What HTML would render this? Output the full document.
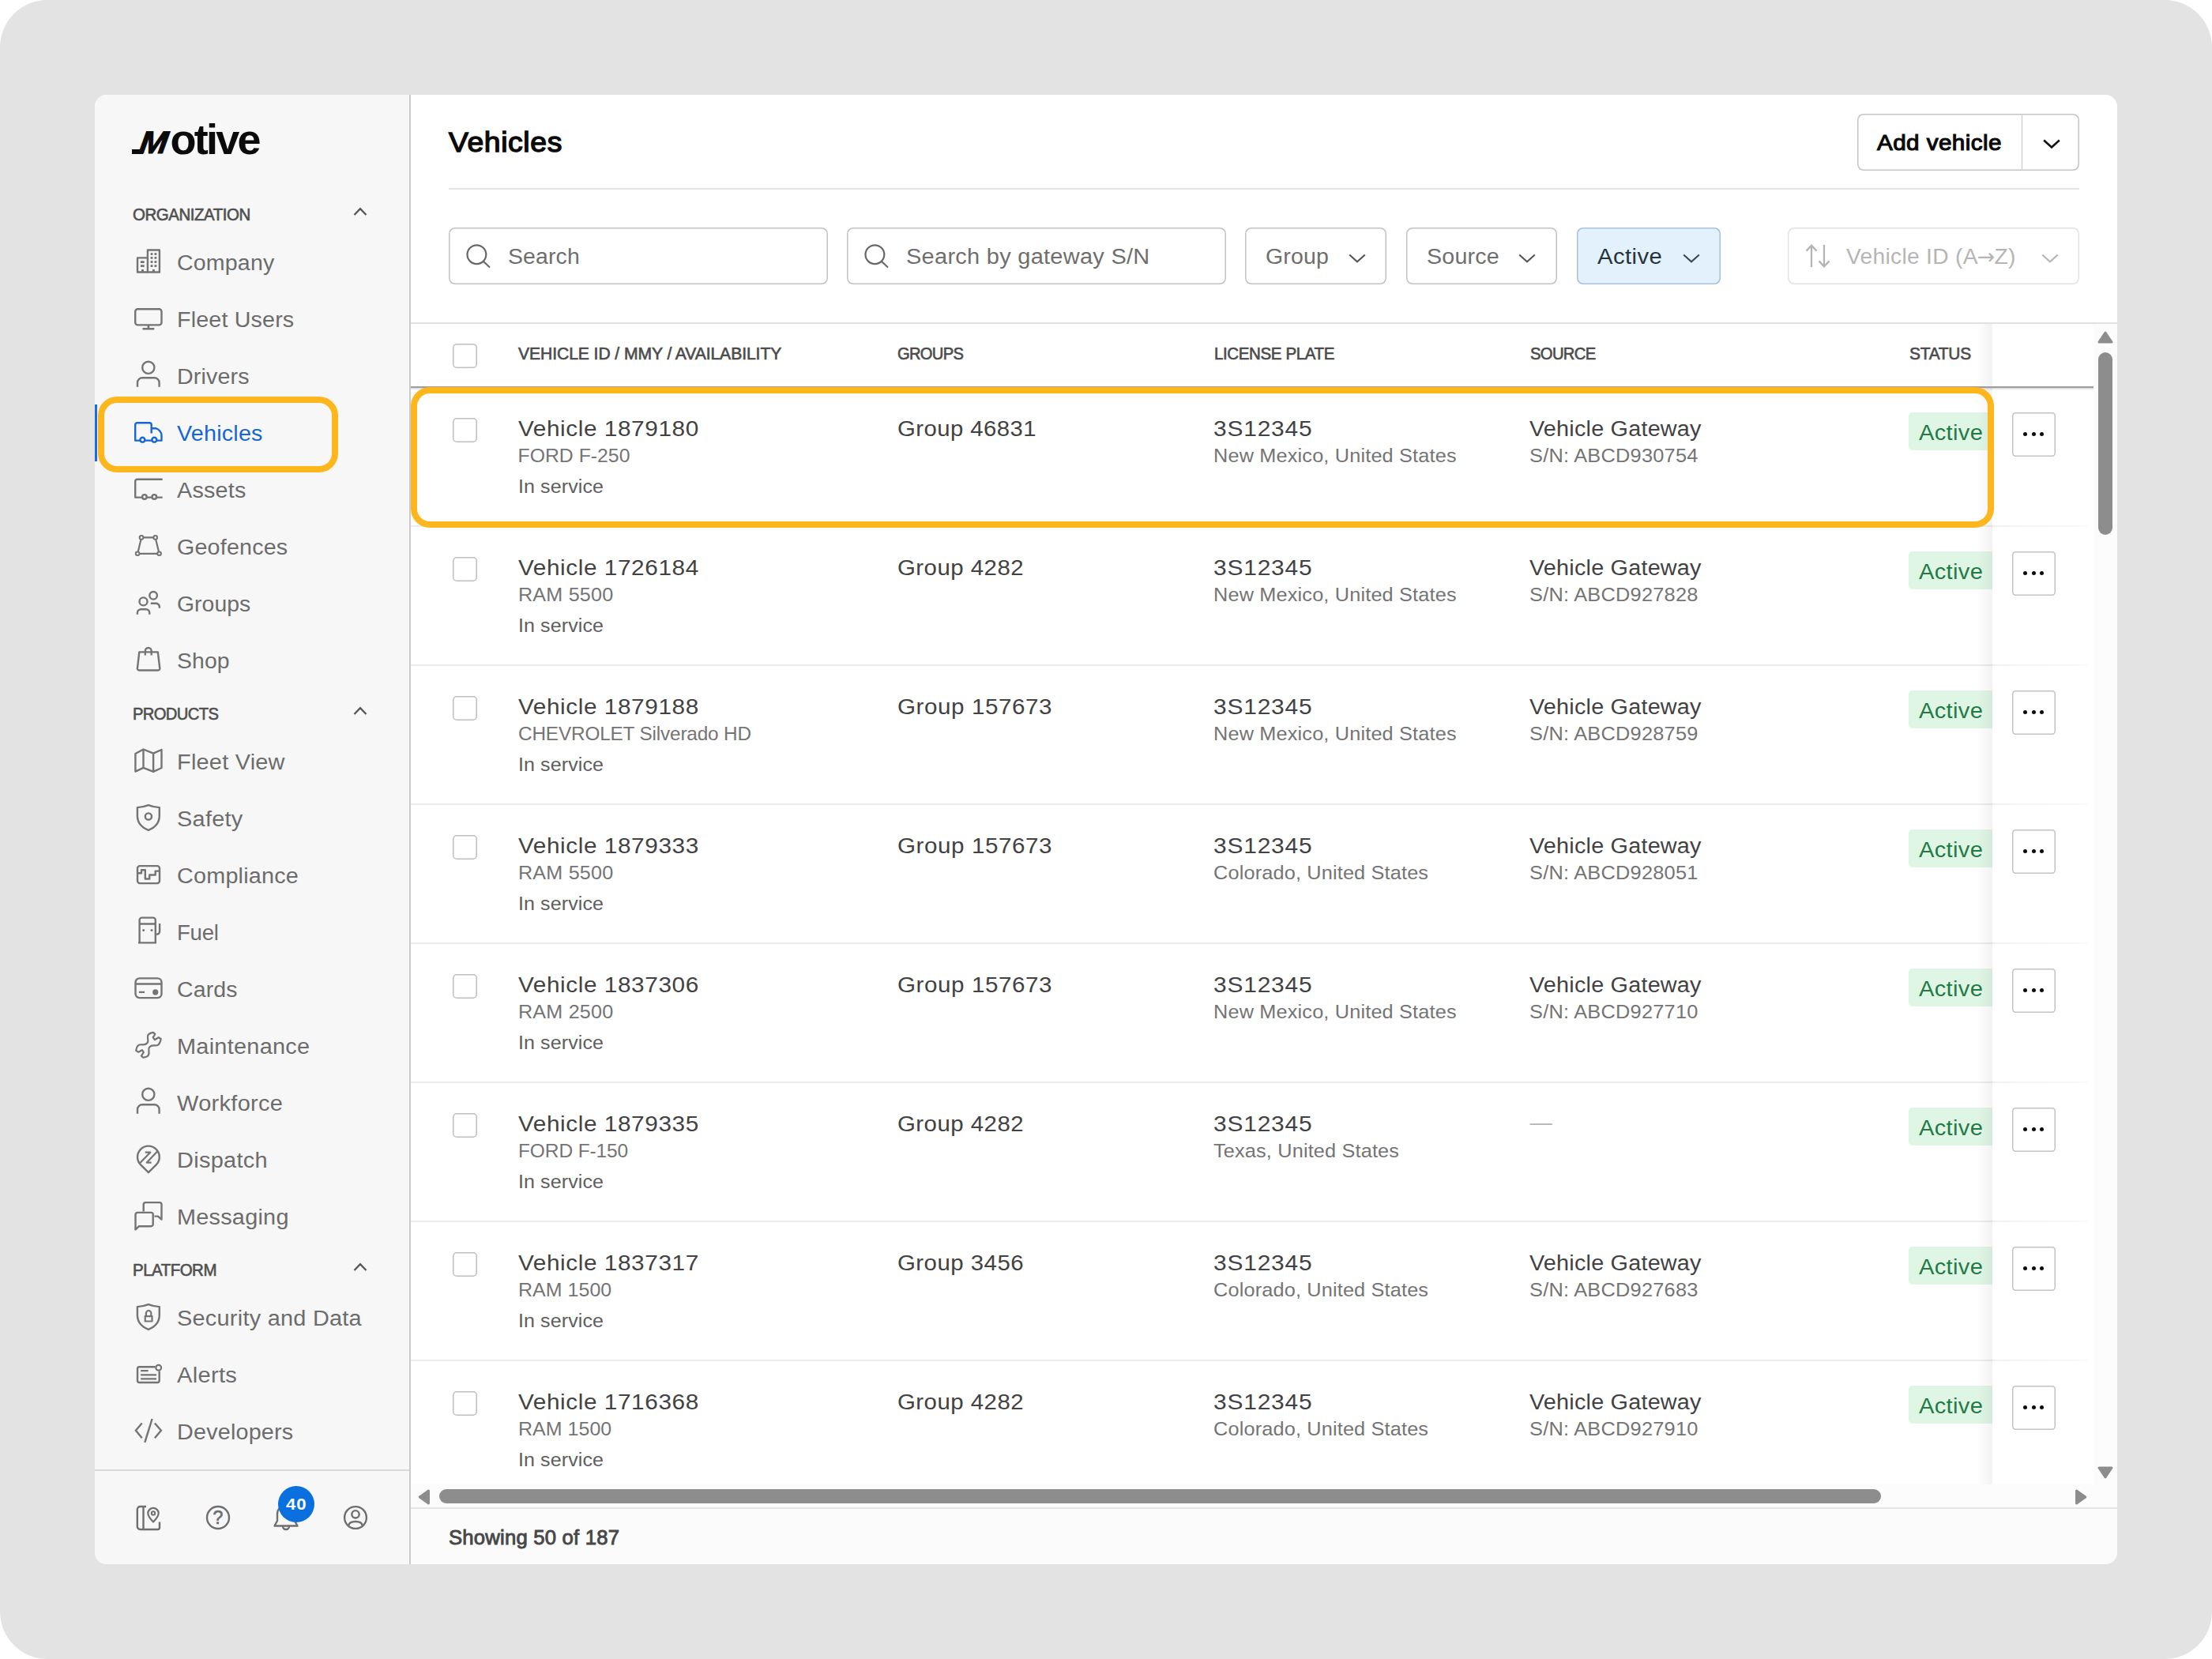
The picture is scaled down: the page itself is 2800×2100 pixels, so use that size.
<!DOCTYPE html><html lang="en"><head><meta charset="utf-8"><title>Vehicles</title><style>
html,body{margin:0;padding:0;background:#fff;}
body{width:2800px;height:2100px;overflow:hidden;position:relative;font-family:"Liberation Sans",sans-serif;}
.b{position:absolute;box-sizing:border-box;display:block;}
.t{position:absolute;white-space:nowrap;line-height:1;display:block;}
.cb{position:absolute;box-sizing:border-box;width:31px;height:31px;box-shadow:inset 0 0 0 1.5px #bfbfbf;border-radius:5px;background:#fff;}
.tag{position:absolute;box-sizing:border-box;background:#e0f6e5;border-radius:5px;height:47.5px;width:130px;}
.more{position:absolute;box-sizing:border-box;width:55.5px;height:55.5px;box-shadow:inset 0 0 0 1.5px #c2c2c2;border-radius:4.5px;background:#fff;}
.more i{position:absolute;width:5px;height:5px;border-radius:50%;background:#0d0d0d;top:25.2px;}
.fbox{position:absolute;box-sizing:border-box;box-shadow:inset 0 0 0 1.5px #c2c2c2;border-radius:8px;background:#fff;}
.hl{position:absolute;box-sizing:border-box;border:8px solid #fdb71c;}
</style></head><body>
<div class="b" style="left:0px;top:0px;width:2800px;height:2100px;background:#e3e3e3;border-radius:60px;"></div>
<div class="b" style="left:120px;top:120px;width:2560px;height:1860px;background:#fff;border-radius:15px;"></div>
<div class="b" style="left:120px;top:120px;width:400px;height:1860px;background:#f7f7f7;border-radius:15px 0 0 15px;border-right:2px solid #cbcbcb;"></div>
<nav class="b" style="left:0;top:0;width:0;height:0">
<div class="b" style="left:167.2px;top:188.8px;width:14px;height:6px;background:#0b0b0b;"></div>
<span class="t" style="left:174px;top:149.19px;font-size:54px;font-weight:700;color:#0b0b0b;letter-spacing:-2.75px;"><span style="display:inline-block;position:relative;top:-1.6px;font-size:40px;font-style:italic;letter-spacing:0;width:33.3px;margin-right:8.2px;-webkit-text-stroke:1.2px #0b0b0b;transform:scaleX(1.06) skewX(-8deg);transform-origin:0 100%;">M</span>otive</span>
<span class="t" style="left:167.50px;top:261.88px;font-size:21.4px;color:#505050;letter-spacing:-0.459px;transform:scaleX(0.9553);transform-origin:0 0;-webkit-text-stroke:0.64px #505050;">ORGANIZATION</span>
<svg class="b" style="left:447px;top:262px;overflow:visible" width="18" height="12" viewBox="0 0 18 12" fill="none" stroke="#555" stroke-width="2.3" stroke-linejoin="round" ><path d="M1.5 10 9 2.2 16.5 10" stroke-linejoin="miter"/></svg>
<span class="t" style="left:167.50px;top:893.88px;font-size:21.4px;color:#505050;letter-spacing:-0.676px;transform:scaleX(0.9445);transform-origin:0 0;-webkit-text-stroke:0.64px #505050;">PRODUCTS</span>
<svg class="b" style="left:447px;top:894px;overflow:visible" width="18" height="12" viewBox="0 0 18 12" fill="none" stroke="#555" stroke-width="2.3" stroke-linejoin="round" ><path d="M1.5 10 9 2.2 16.5 10" stroke-linejoin="miter"/></svg>
<span class="t" style="left:167.50px;top:1597.88px;font-size:21.4px;color:#505050;letter-spacing:-0.507px;transform:scaleX(0.9559);transform-origin:0 0;-webkit-text-stroke:0.64px #505050;">PLATFORM</span>
<svg class="b" style="left:447px;top:1598px;overflow:visible" width="18" height="12" viewBox="0 0 18 12" fill="none" stroke="#555" stroke-width="2.3" stroke-linejoin="round" ><path d="M1.5 10 9 2.2 16.5 10" stroke-linejoin="miter"/></svg>
<svg class="b" style="left:169.5px;top:314px;overflow:visible" width="36" height="36" viewBox="0 0 36 36" fill="none" stroke="#747474" stroke-width="2.4" stroke-linejoin="round" ><g color="#737373"><rect x="16.9" y="2.5" width="15" height="28"/><path d="M16.9 12.4H4V30.5H16.9"/><rect x="20.60" y="6.10" width="2.8" height="2.8" fill="currentColor" stroke="none"/><rect x="20.60" y="11.00" width="2.8" height="2.8" fill="currentColor" stroke="none"/><rect x="20.60" y="16.10" width="2.8" height="2.8" fill="currentColor" stroke="none"/><rect x="20.60" y="21.20" width="2.8" height="2.8" fill="currentColor" stroke="none"/><rect x="25.50" y="6.10" width="2.8" height="2.8" fill="currentColor" stroke="none"/><rect x="25.50" y="11.00" width="2.8" height="2.8" fill="currentColor" stroke="none"/><rect x="25.50" y="16.10" width="2.8" height="2.8" fill="currentColor" stroke="none"/><rect x="25.50" y="21.20" width="2.8" height="2.8" fill="currentColor" stroke="none"/><path d="M7.9 17.6H12.7M7.9 22.6H12.7" stroke-width="2.6"/><path d="M10.5 30.5V27M24.4 30.5V27" stroke-width="2.8"/></g></svg>
<span class="t" style="left:223.50px;top:318.33px;font-size:28.2px;color:#6c6c6c;letter-spacing:0.169px;transform:scaleX(1.0127);transform-origin:0 0;">Company</span>
<svg class="b" style="left:169.5px;top:386px;overflow:visible" width="36" height="36" viewBox="0 0 36 36" fill="none" stroke="#747474" stroke-width="2.4" stroke-linejoin="round" ><rect x="1.2" y="5.2" width="33.3" height="20.2" rx="3.2"/><path d="M17.9 25.4V30.3M10.5 30.3H25.3" stroke-width="2.6"/></svg>
<span class="t" style="left:223.50px;top:390.33px;font-size:28.2px;color:#6c6c6c;letter-spacing:0.160px;transform:scaleX(1.0169);transform-origin:0 0;">Fleet Users</span>
<svg class="b" style="left:169.5px;top:458px;overflow:visible" width="36" height="36" viewBox="0 0 36 36" fill="none" stroke="#747474" stroke-width="2.4" stroke-linejoin="round" ><circle cx="17.8" cy="7.3" r="7.6"/><path d="M4 31.8V26.3a6 6 0 0 1 6-6H25.6a6 6 0 0 1 6 6V31.8"/></svg>
<span class="t" style="left:223.50px;top:462.33px;font-size:28.2px;color:#6c6c6c;letter-spacing:0.150px;transform:scaleX(1.0153);transform-origin:0 0;">Drivers</span>
<svg class="b" style="left:169.5px;top:530px;overflow:visible" width="36" height="36" viewBox="0 0 36 36" fill="none" stroke="#1766d6" stroke-width="2.4" stroke-linejoin="round" ><path d="M7.4 27.6H1.2V7.7a2.5 2.5 0 0 1 2.5-2.5H19.2a2.5 2.5 0 0 1 2.5 2.5V18.5"/><path d="M21.7 12.2H27.2C31 13.3 34.5 17.2 34.5 21V27.6H28.3M22.3 27.6H13.4"/><circle cx="10.4" cy="26.7" r="2.95"/><circle cx="25.3" cy="26.7" r="2.95"/></svg>
<span class="t" style="left:223.50px;top:534.33px;font-size:28.2px;color:#1766d6;letter-spacing:0.196px;transform:scaleX(1.0200);transform-origin:0 0;">Vehicles</span>
<svg class="b" style="left:169.5px;top:602px;overflow:visible" width="36" height="36" viewBox="0 0 36 36" fill="none" stroke="#747474" stroke-width="2.4" stroke-linejoin="round" ><path d="M35.7 4.7H3.7a2.5 2.5 0 0 0-2.5 2.5V27.6H9.8M16 27.6H22.2M28.4 27.6H35.7"/><circle cx="12.9" cy="26.9" r="2.8"/><circle cx="25.3" cy="26.9" r="2.8"/></svg>
<span class="t" style="left:223.50px;top:606.33px;font-size:28.2px;color:#6c6c6c;letter-spacing:0.213px;transform:scaleX(1.0192);transform-origin:0 0;">Assets</span>
<svg class="b" style="left:169.5px;top:674px;overflow:visible" width="36" height="36" viewBox="0 0 36 36" fill="none" stroke="#747474" stroke-width="2.4" stroke-linejoin="round" ><path d="M11.4 6.4H24.3M6.5 26.8H29.2M8.5 8.7 4.7 24.4M27.2 8.7 31 24.4" stroke-width="2.2"/><circle cx="9" cy="6.4" r="2.3" stroke-width="2"/><circle cx="26.7" cy="6.4" r="2.3" stroke-width="2"/><circle cx="4.1" cy="26.8" r="2.3" stroke-width="2"/><circle cx="31.6" cy="26.8" r="2.3" stroke-width="2"/></svg>
<span class="t" style="left:223.50px;top:678.33px;font-size:28.2px;color:#6c6c6c;letter-spacing:0.189px;transform:scaleX(1.0169);transform-origin:0 0;">Geofences</span>
<svg class="b" style="left:169.5px;top:746px;overflow:visible" width="36" height="36" viewBox="0 0 36 36" fill="none" stroke="#747474" stroke-width="2.4" stroke-linejoin="round" ><circle cx="24.1" cy="7.8" r="4.8"/><circle cx="11.5" cy="15.4" r="5"/><path d="M20.8 17.75H27.5a4.4 4.4 0 0 1 4.4 4.4V23.8"/><path d="M3.9 31.7V29.6a4.4 4.4 0 0 1 4.4-4.4H14.85a4.4 4.4 0 0 1 4.4 4.4V31.7"/></svg>
<span class="t" style="left:223.50px;top:750.33px;font-size:28.2px;color:#6c6c6c;letter-spacing:0.067px;transform:scaleX(1.0055);transform-origin:0 0;">Groups</span>
<svg class="b" style="left:169.5px;top:818px;overflow:visible" width="36" height="36" viewBox="0 0 36 36" fill="none" stroke="#747474" stroke-width="2.4" stroke-linejoin="round" ><path d="M6.3 7.4H29.8L32.3 28a2.2 2.2 0 0 1-2.2 2.5H6.1a2.2 2.2 0 0 1-2.2-2.5Z"/><path d="M13.8 11.5V6a3.95 3.95 0 0 1 7.9 0V11.5"/></svg>
<span class="t" style="left:223.50px;top:822.33px;font-size:28.2px;color:#6c6c6c;letter-spacing:0.099px;transform:scaleX(1.0068);transform-origin:0 0;">Shop</span>
<svg class="b" style="left:169.5px;top:946px;overflow:visible" width="36" height="36" viewBox="0 0 36 36" fill="none" stroke="#747474" stroke-width="2.4" stroke-linejoin="round" ><path d="M1.4 8 11.5 2.5 24.1 7.7 34.5 3V26L24.1 30.8 11.5 25.8 1.4 30.6ZM11.5 2.5V25.8M24.1 7.7V30.8"/></svg>
<span class="t" style="left:223.50px;top:950.33px;font-size:28.2px;color:#6c6c6c;letter-spacing:0.233px;transform:scaleX(1.0245);transform-origin:0 0;">Fleet View</span>
<svg class="b" style="left:169.5px;top:1018px;overflow:visible" width="36" height="36" viewBox="0 0 36 36" fill="none" stroke="#747474" stroke-width="2.4" stroke-linejoin="round" ><path d="M17.85 1.2C13.5 3 8.5 3.9 3.9 4.1V14.5C3.9 23 9.5 29.5 17.85 32.8C26.2 29.5 31.8 23 31.8 14.5V4.1C27.2 3.9 22.2 3 17.85 1.2Z"/><circle cx="17.9" cy="15.5" r="4.1"/></svg>
<span class="t" style="left:223.50px;top:1022.33px;font-size:28.2px;color:#6c6c6c;letter-spacing:0.266px;transform:scaleX(1.0255);transform-origin:0 0;">Safety</span>
<svg class="b" style="left:169.5px;top:1090px;overflow:visible" width="36" height="36" viewBox="0 0 36 36" fill="none" stroke="#747474" stroke-width="2.4" stroke-linejoin="round" ><rect x="4" y="6.1" width="28" height="22" rx="3"/><path d="M4 15.3H9V11.2H13.8V22.5H19.25V17.5H26.7V12.6H32"/></svg>
<span class="t" style="left:223.50px;top:1094.33px;font-size:28.2px;color:#6c6c6c;letter-spacing:0.219px;transform:scaleX(1.0202);transform-origin:0 0;">Compliance</span>
<svg class="b" style="left:169.5px;top:1162px;overflow:visible" width="36" height="36" viewBox="0 0 36 36" fill="none" stroke="#747474" stroke-width="2.4" stroke-linejoin="round" ><path d="M6.6 31.4V2.6a3 3 0 0 1 3-3H23.8a3 3 0 0 1 3 3V31.4M5 31.4H28M6.6 7.5H26.8"/><path d="M26.8 20.6H28.6a3.5 3.5 0 0 0 3.5-3.5V7"/><circle cx="11.7" cy="15.6" r="1.5" fill="currentColor" stroke="none" color="#737373"/><circle cx="22" cy="15.6" r="1.5" fill="currentColor" stroke="none" color="#737373"/></svg>
<span class="t" style="left:223.50px;top:1166.33px;font-size:28.2px;color:#6c6c6c;letter-spacing:-0.268px;transform:scaleX(0.9785);transform-origin:0 0;">Fuel</span>
<svg class="b" style="left:169.5px;top:1234px;overflow:visible" width="36" height="36" viewBox="0 0 36 36" fill="none" stroke="#747474" stroke-width="2.4" stroke-linejoin="round" ><rect x="1.5" y="4.4" width="33" height="24.7" rx="5"/><path d="M1.5 11.5H34.5M5.9 21.9H13.1"/><circle cx="26.7" cy="21.9" r="3.6" fill="currentColor" stroke="none" color="#737373"/></svg>
<span class="t" style="left:223.50px;top:1238.33px;font-size:28.2px;color:#6c6c6c;letter-spacing:0.136px;transform:scaleX(1.0109);transform-origin:0 0;">Cards</span>
<svg class="b" style="left:169.5px;top:1306px;overflow:visible" width="36" height="36" viewBox="0 0 36 36" fill="none" stroke="#747474" stroke-width="2.4" stroke-linejoin="round" ><path d="M24 0.9 C21 1.3 18.6 2.4 17.6 3.9 C16.6 5.5 16.9 8 17.2 9.6 C17.5 11.2 17.6 12.8 16.4 14.2 C15.1 15.7 13.2 16.4 11.2 16.4 C9.2 16.4 7.2 15.8 5.6 16.9 C4 18 2.6 21 2.2 23.9 L5.2 25.7 L9.9 23.2 L11.8 26.2 L8.8 30.7 L11.3 32.7 C14 32.3 16.6 31.4 17.7 29.8 C18.8 28.2 18.7 26.2 18.4 24.4 C18.1 22.6 18 20.8 19.2 19.4 C20.5 17.9 22.4 17.3 24.4 17.3 C26.4 17.3 28.6 17.8 30.2 16.6 C31.8 15.4 33.2 12 33.7 9 L30.7 7.2 L25.8 10.2 L23.7 7.1 L26.4 3Z" stroke-width="2.2"/></svg>
<span class="t" style="left:223.50px;top:1310.33px;font-size:28.2px;color:#6c6c6c;letter-spacing:0.261px;transform:scaleX(1.0248);transform-origin:0 0;">Maintenance</span>
<svg class="b" style="left:169.5px;top:1378px;overflow:visible" width="36" height="36" viewBox="0 0 36 36" fill="none" stroke="#747474" stroke-width="2.4" stroke-linejoin="round" ><circle cx="17.8" cy="7.3" r="7.6"/><path d="M4 31.8V26.3a6 6 0 0 1 6-6H25.6a6 6 0 0 1 6 6V31.8"/></svg>
<span class="t" style="left:223.50px;top:1382.33px;font-size:28.2px;color:#6c6c6c;letter-spacing:0.294px;transform:scaleX(1.0283);transform-origin:0 0;">Workforce</span>
<svg class="b" style="left:169.5px;top:1450px;overflow:visible" width="36" height="36" viewBox="0 0 36 36" fill="none" stroke="#747474" stroke-width="2.4" stroke-linejoin="round" ><path d="M17.9 34.2 8.3 24.6A13.9 13.9 0 1 1 27.5 24.6Z"/><path d="M6.8 22.5 20.3 8.7H13.8M29.4 7.2 15.8 21.6H21.7" stroke-width="2.2"/></svg>
<span class="t" style="left:223.50px;top:1454.33px;font-size:28.2px;color:#6c6c6c;letter-spacing:0.282px;transform:scaleX(1.0276);transform-origin:0 0;">Dispatch</span>
<svg class="b" style="left:169.5px;top:1522px;overflow:visible" width="36" height="36" viewBox="0 0 36 36" fill="none" stroke="#747474" stroke-width="2.4" stroke-linejoin="round" ><path d="M11.7 11.5V2.6a2.5 2.5 0 0 1 2.5-2.5H32a2.5 2.5 0 0 1 2.5 2.5V21.5L30 17.6H25.5"/><path d="M1.5 34.5V15.4a2.5 2.5 0 0 1 2.5-2.5H21.2a2.5 2.5 0 0 1 2.5 2.5V27.7a2.5 2.5 0 0 1-2.5 2.5H6Z"/></svg>
<span class="t" style="left:223.50px;top:1526.33px;font-size:28.2px;color:#6c6c6c;letter-spacing:0.249px;transform:scaleX(1.0224);transform-origin:0 0;">Messaging</span>
<svg class="b" style="left:169.5px;top:1650px;overflow:visible" width="36" height="36" viewBox="0 0 36 36" fill="none" stroke="#747474" stroke-width="2.4" stroke-linejoin="round" ><path d="M17.85 1.2C13.5 3 8.5 3.9 3.9 4.1V14.5C3.9 23 9.5 29.5 17.85 32.8C26.2 29.5 31.8 23 31.8 14.5V4.1C27.2 3.9 22.2 3 17.85 1.2Z"/><rect x="13.7" y="16.2" width="8.8" height="6.3" stroke-width="2.2"/><path d="M14.9 16.2V12.2a3.2 3.2 0 0 1 6.4 0V16.2" stroke-width="2.2"/></svg>
<span class="t" style="left:223.50px;top:1654.33px;font-size:28.2px;color:#6c6c6c;letter-spacing:0.235px;transform:scaleX(1.0258);transform-origin:0 0;">Security and Data</span>
<svg class="b" style="left:169.5px;top:1722px;overflow:visible" width="36" height="36" viewBox="0 0 36 36" fill="none" stroke="#747474" stroke-width="2.4" stroke-linejoin="round" ><path d="M26.5 8.3H6.5a2.5 2.5 0 0 0-2.5 2.5V25.5a2.5 2.5 0 0 0 2.5 2.5H29.2a2.5 2.5 0 0 0 2.5-2.5V13.6"/><circle cx="30.7" cy="9.3" r="3.4" stroke-width="2.2"/><path d="M8.1 13.2H17.6M8.1 18.3H28M8.1 23.3H28" stroke-width="2.2"/></svg>
<span class="t" style="left:223.50px;top:1726.33px;font-size:28.2px;color:#6c6c6c;letter-spacing:0.293px;transform:scaleX(1.0314);transform-origin:0 0;">Alerts</span>
<svg class="b" style="left:169.5px;top:1794px;overflow:visible" width="36" height="36" viewBox="0 0 36 36" fill="none" stroke="#747474" stroke-width="2.4" stroke-linejoin="round" ><path d="M9.7 7.5 1.9 16.7 9.7 26.3M25.9 7.5 33.9 16.7 25.9 26.3M22.6 2 13.3 31.8" stroke-linejoin="miter"/></svg>
<span class="t" style="left:223.50px;top:1798.33px;font-size:28.2px;color:#6c6c6c;letter-spacing:0.199px;transform:scaleX(1.0192);transform-origin:0 0;">Developers</span>
<div class="b" style="left:120px;top:512px;width:3px;height:72px;background:#1a6be0;"></div>
<div class="hl" style="left:124px;top:502px;width:304px;height:95.5px;border-radius:24px;"></div>
<div class="b" style="left:120px;top:1859.5px;width:398px;height:2px;background:#d9d9d9;"></div>
<svg class="b" style="left:169.5px;top:1903px;overflow:visible" width="36" height="36" viewBox="0 0 36 36" fill="none" stroke="#6f6f6f" stroke-width="2.4" stroke-linejoin="round" ><path d="M32 23.5V30.5a2.5 2.5 0 0 1-2.5 2.5H7.5a3.7 3.7 0 0 1-3.7-3.7V7.7A3.7 3.7 0 0 1 7.5 4H15M11.5 4V33"/><path d="M24 23.6C20.5 20 17.3 16.6 17.3 12.6a6.7 6.7 0 0 1 13.4 0C30.7 16.6 27.5 20 24 23.6Z" stroke-width="2.2"/><circle cx="24" cy="12.4" r="2.2" stroke-width="2"/></svg>
<svg class="b" style="left:257.5px;top:1903px;overflow:visible" width="36" height="36" viewBox="0 0 36 36" fill="none" stroke="#6f6f6f" stroke-width="2.4" stroke-linejoin="round" ><circle cx="18" cy="18" r="14"/><text x="18" y="26.2" text-anchor="middle" font-family="Liberation Sans, sans-serif" font-size="23" fill="#6f6f6f" stroke="#6f6f6f" stroke-width="0.7">?</text></svg>
<svg class="b" style="left:343.5px;top:1903px;overflow:visible" width="36" height="36" viewBox="0 0 36 36" fill="none" stroke="#6f6f6f" stroke-width="2.4" stroke-linejoin="round" ><path d="M3.5 28.5H32.5L29 22V13.5a11 11 0 0 0-22 0V22Z"/><path d="M14 29a4 4 0 0 0 8 0"/></svg>
<svg class="b" style="left:432px;top:1903px;overflow:visible" width="36" height="36" viewBox="0 0 36 36" fill="none" stroke="#6f6f6f" stroke-width="2.4" stroke-linejoin="round" ><circle cx="18" cy="18" r="13.9"/><circle cx="18" cy="13.8" r="4.7"/><path d="M9.3 28.2C9.8 24.5 13 23 18 23s8.2 1.5 8.7 5.2"/></svg>
<div class="b" style="left:351.8px;top:1880.7px;width:46.2px;height:46.2px;background:#0a6fdf;border-radius:50%;"></div>
<span class="t" style="left:362.20px;top:1893.42px;font-size:21px;color:#fff;letter-spacing:0.817px;transform:scaleX(1.0554);transform-origin:0 0;font-weight:700;">40</span>
</nav><main class="b" style="left:0;top:0;width:0;height:0"><header>
<span class="t" style="left:567.50px;top:162.86px;font-size:35.6px;color:#0a0a0a;letter-spacing:0.586px;transform:scaleX(1.0488);transform-origin:0 0;-webkit-text-stroke:1.42px #0a0a0a;">Vehicles</span>
<div class="fbox" style="left:2351px;top:144px;width:281px;height:72px;box-shadow:inset 0 0 0 1.5px #c4c4c4;"></div>
<div class="b" style="left:2558.6px;top:145.5px;width:1.75px;height:68.5px;background:#c4c4c4;"></div>
<span class="t" style="left:2376.00px;top:166.46px;font-size:28.4px;color:#0a0a0a;letter-spacing:0.410px;transform:scaleX(1.0435);transform-origin:0 0;-webkit-text-stroke:1.14px #0a0a0a;">Add vehicle</span>
<svg class="b" style="left:2585.5px;top:175.5px;overflow:visible" width="22" height="12" viewBox="0 0 22 12" fill="none" stroke="#111" stroke-width="2.6" stroke-linejoin="round" ><path d="M1.2 1.5 11.0 10.4 20.8 1.5" stroke-linejoin="miter"/></svg>
<div class="b" style="left:568px;top:238px;width:2064px;height:2px;background:#e3e3e3;"></div>
</header><section>
<div class="fbox" style="left:568px;top:288px;width:480px;height:72px;"></div>
<svg class="b" style="left:589.5px;top:308.5px;overflow:visible" width="31" height="31" viewBox="0 0 31 31" fill="none" stroke="#676767" stroke-width="2.2" stroke-linejoin="round" ><circle cx="13.4" cy="13.2" r="11.9"/><path d="M21.8 21.8 30 29.5"/></svg>
<span class="t" style="left:642.50px;top:310.13px;font-size:28.2px;color:#6e6e6e;letter-spacing:0.116px;transform:scaleX(1.0098);transform-origin:0 0;">Search</span>
<div class="fbox" style="left:1072px;top:288px;width:480px;height:72px;"></div>
<svg class="b" style="left:1093.8px;top:308.5px;overflow:visible" width="31" height="31" viewBox="0 0 31 31" fill="none" stroke="#676767" stroke-width="2.2" stroke-linejoin="round" ><circle cx="13.4" cy="13.2" r="11.9"/><path d="M21.8 21.8 30 29.5"/></svg>
<span class="t" style="left:1146.50px;top:310.13px;font-size:28.2px;color:#6e6e6e;letter-spacing:0.268px;transform:scaleX(1.0279);transform-origin:0 0;">Search by gateway S/N</span>
<div class="fbox" style="left:1576px;top:288px;width:179px;height:72px;"></div>
<span class="t" style="left:1601.70px;top:310.13px;font-size:28.2px;color:#6e6e6e;letter-spacing:0.145px;transform:scaleX(1.0112);transform-origin:0 0;">Group</span>
<svg class="b" style="left:1707px;top:321px;overflow:visible" width="22" height="12" viewBox="0 0 22 12" fill="none" stroke="#555" stroke-width="2.1" stroke-linejoin="round" ><path d="M1.2 1.5 11.0 10.4 20.8 1.5" stroke-linejoin="miter"/></svg>
<div class="fbox" style="left:1779.5px;top:288px;width:191.5px;height:72px;"></div>
<span class="t" style="left:1805.70px;top:310.13px;font-size:28.2px;color:#6e6e6e;letter-spacing:0.194px;transform:scaleX(1.0165);transform-origin:0 0;">Source</span>
<svg class="b" style="left:1922px;top:321px;overflow:visible" width="22" height="12" viewBox="0 0 22 12" fill="none" stroke="#555" stroke-width="2.1" stroke-linejoin="round" ><path d="M1.2 1.5 11.0 10.4 20.8 1.5" stroke-linejoin="miter"/></svg>
<div class="fbox" style="left:1996px;top:288px;width:181.5px;height:72px;background:#e2f1fc;box-shadow:inset 0 0 0 1.5px #a9c1da;"></div>
<span class="t" style="left:2022.00px;top:310.13px;font-size:28.2px;color:#26323f;letter-spacing:0.390px;transform:scaleX(1.0395);transform-origin:0 0;">Active</span>
<svg class="b" style="left:2130px;top:321px;overflow:visible" width="22" height="12" viewBox="0 0 22 12" fill="none" stroke="#3c4650" stroke-width="2.1" stroke-linejoin="round" ><path d="M1.2 1.5 11.0 10.4 20.8 1.5" stroke-linejoin="miter"/></svg>
<div class="fbox" style="left:2263px;top:288px;width:369px;height:72px;box-shadow:inset 0 0 0 1.5px #e2e2e2;"></div>
<svg class="b" style="left:2284.5px;top:308px;overflow:visible" width="32" height="32" viewBox="0 0 32 32" fill="none" stroke="#b4b4b4" stroke-width="2.3" stroke-linejoin="round" ><path d="M8 30V3M1.5 9.6 8 2.6 14.5 9.6M24 2V29M17.5 22.4 24 29.4 30.5 22.4" stroke-linejoin="miter"/></svg>
<span class="t" style="left:2337px;top:310.13px;font-size:28.2px;color:#b5b5b5;letter-spacing:0.3px">Vehicle ID (A<span style="font-family:'DejaVu Sans',sans-serif;font-size:27px;letter-spacing:0;margin:0 -1px 0 -1px">→</span>Z)</span>
<svg class="b" style="left:2584px;top:321px;overflow:visible" width="22" height="12" viewBox="0 0 22 12" fill="none" stroke="#b4b4b4" stroke-width="2.1" stroke-linejoin="round" ><path d="M1.2 1.5 11.0 10.4 20.8 1.5" stroke-linejoin="miter"/></svg>
</section><section>
<div class="b" style="left:520px;top:408px;width:2160px;height:2px;background:#e1e1e1;"></div>
<div class="cb" style="left:573px;top:434.5px;"></div>
<span class="t" style="left:656.00px;top:438.08px;font-size:21.4px;color:#4b4b4b;letter-spacing:-0.090px;transform:scaleX(0.9882);transform-origin:0 0;-webkit-text-stroke:0.64px #4b4b4b;">VEHICLE ID / MMY / AVAILABILITY</span>
<span class="t" style="left:1136.00px;top:438.08px;font-size:21.4px;color:#4b4b4b;letter-spacing:-0.754px;transform:scaleX(0.9428);transform-origin:0 0;-webkit-text-stroke:0.64px #4b4b4b;">GROUPS</span>
<span class="t" style="left:1536.50px;top:438.08px;font-size:21.4px;color:#4b4b4b;letter-spacing:-0.393px;transform:scaleX(0.9587);transform-origin:0 0;-webkit-text-stroke:0.64px #4b4b4b;">LICENSE PLATE</span>
<span class="t" style="left:1936.50px;top:438.08px;font-size:21.4px;color:#4b4b4b;letter-spacing:-0.702px;transform:scaleX(0.9459);transform-origin:0 0;-webkit-text-stroke:0.64px #4b4b4b;">SOURCE</span>
<span class="t" style="left:2416.50px;top:438.08px;font-size:21.4px;color:#4b4b4b;letter-spacing:-0.258px;transform:scaleX(0.9768);transform-origin:0 0;-webkit-text-stroke:0.64px #4b4b4b;">STATUS</span>
<div class="cb" style="left:573px;top:529px;"></div>
<span class="t" style="left:655.50px;top:527.83px;font-size:28.2px;color:#424242;letter-spacing:0.535px;transform:scaleX(1.0568);transform-origin:0 0;">Vehicle 1879180</span>
<span class="t" style="left:655.50px;top:565.21px;font-size:24.8px;color:#747474;">FORD F-250</span>
<span class="t" style="left:656.00px;top:603.81px;font-size:24.8px;color:#5e5e5e;letter-spacing:0.079px;transform:scaleX(1.0102);transform-origin:0 0;">In service</span>
<span class="t" style="left:1135.50px;top:527.83px;font-size:28.2px;color:#424242;letter-spacing:0.424px;transform:scaleX(1.0401);transform-origin:0 0;">Group 46831</span>
<span class="t" style="left:1536.00px;top:527.83px;font-size:28.2px;color:#424242;letter-spacing:0.743px;transform:scaleX(1.0628);transform-origin:0 0;">3S12345</span>
<span class="t" style="left:1536.00px;top:565.21px;font-size:24.8px;color:#747474;letter-spacing:0.161px;transform:scaleX(1.0199);transform-origin:0 0;">New Mexico, United States</span>
<span class="t" style="left:1936.00px;top:527.83px;font-size:28.2px;color:#424242;letter-spacing:0.211px;transform:scaleX(1.0215);transform-origin:0 0;">Vehicle Gateway</span>
<span class="t" style="left:1936.00px;top:565.21px;font-size:24.8px;color:#747474;letter-spacing:0.222px;transform:scaleX(1.0233);transform-origin:0 0;">S/N: ABCD930754</span>
<div class="tag" style="left:2416px;top:522px;"></div>
<span class="t" style="left:2429.30px;top:533.13px;font-size:28.2px;color:#237a45;letter-spacing:0.315px;transform:scaleX(1.0317);transform-origin:0 0;">Active</span>
<div class="b" style="left:520px;top:665px;width:2130px;height:2px;background:#ececec;"></div>
<div class="cb" style="left:573px;top:705px;"></div>
<span class="t" style="left:655.50px;top:703.83px;font-size:28.2px;color:#424242;letter-spacing:0.535px;transform:scaleX(1.0568);transform-origin:0 0;">Vehicle 1726184</span>
<span class="t" style="left:655.50px;top:741.21px;font-size:24.8px;color:#747474;letter-spacing:0.172px;transform:scaleX(1.0157);transform-origin:0 0;">RAM 5500</span>
<span class="t" style="left:656.00px;top:779.81px;font-size:24.8px;color:#5e5e5e;letter-spacing:0.079px;transform:scaleX(1.0102);transform-origin:0 0;">In service</span>
<span class="t" style="left:1135.50px;top:703.83px;font-size:28.2px;color:#424242;letter-spacing:0.458px;transform:scaleX(1.0432);transform-origin:0 0;">Group 4282</span>
<span class="t" style="left:1536.00px;top:703.83px;font-size:28.2px;color:#424242;letter-spacing:0.743px;transform:scaleX(1.0628);transform-origin:0 0;">3S12345</span>
<span class="t" style="left:1536.00px;top:741.21px;font-size:24.8px;color:#747474;letter-spacing:0.161px;transform:scaleX(1.0199);transform-origin:0 0;">New Mexico, United States</span>
<span class="t" style="left:1936.00px;top:703.83px;font-size:28.2px;color:#424242;letter-spacing:0.211px;transform:scaleX(1.0215);transform-origin:0 0;">Vehicle Gateway</span>
<span class="t" style="left:1936.00px;top:741.21px;font-size:24.8px;color:#747474;letter-spacing:0.222px;transform:scaleX(1.0233);transform-origin:0 0;">S/N: ABCD927828</span>
<div class="tag" style="left:2416px;top:698px;"></div>
<span class="t" style="left:2429.30px;top:709.13px;font-size:28.2px;color:#237a45;letter-spacing:0.315px;transform:scaleX(1.0317);transform-origin:0 0;">Active</span>
<div class="b" style="left:520px;top:841px;width:2130px;height:2px;background:#ececec;"></div>
<div class="cb" style="left:573px;top:881px;"></div>
<span class="t" style="left:655.50px;top:879.83px;font-size:28.2px;color:#424242;letter-spacing:0.535px;transform:scaleX(1.0568);transform-origin:0 0;">Vehicle 1879188</span>
<span class="t" style="left:655.50px;top:917.21px;font-size:24.8px;color:#747474;letter-spacing:-0.175px;transform:scaleX(0.9821);transform-origin:0 0;">CHEVROLET Silverado HD</span>
<span class="t" style="left:656.00px;top:955.81px;font-size:24.8px;color:#5e5e5e;letter-spacing:0.079px;transform:scaleX(1.0102);transform-origin:0 0;">In service</span>
<span class="t" style="left:1135.50px;top:879.83px;font-size:28.2px;color:#424242;letter-spacing:0.530px;transform:scaleX(1.0508);transform-origin:0 0;">Group 157673</span>
<span class="t" style="left:1536.00px;top:879.83px;font-size:28.2px;color:#424242;letter-spacing:0.743px;transform:scaleX(1.0628);transform-origin:0 0;">3S12345</span>
<span class="t" style="left:1536.00px;top:917.21px;font-size:24.8px;color:#747474;letter-spacing:0.161px;transform:scaleX(1.0199);transform-origin:0 0;">New Mexico, United States</span>
<span class="t" style="left:1936.00px;top:879.83px;font-size:28.2px;color:#424242;letter-spacing:0.211px;transform:scaleX(1.0215);transform-origin:0 0;">Vehicle Gateway</span>
<span class="t" style="left:1936.00px;top:917.21px;font-size:24.8px;color:#747474;letter-spacing:0.222px;transform:scaleX(1.0233);transform-origin:0 0;">S/N: ABCD928759</span>
<div class="tag" style="left:2416px;top:874px;"></div>
<span class="t" style="left:2429.30px;top:885.13px;font-size:28.2px;color:#237a45;letter-spacing:0.315px;transform:scaleX(1.0317);transform-origin:0 0;">Active</span>
<div class="b" style="left:520px;top:1017px;width:2130px;height:2px;background:#ececec;"></div>
<div class="cb" style="left:573px;top:1057px;"></div>
<span class="t" style="left:655.50px;top:1055.83px;font-size:28.2px;color:#424242;letter-spacing:0.535px;transform:scaleX(1.0568);transform-origin:0 0;">Vehicle 1879333</span>
<span class="t" style="left:655.50px;top:1093.21px;font-size:24.8px;color:#747474;letter-spacing:0.172px;transform:scaleX(1.0157);transform-origin:0 0;">RAM 5500</span>
<span class="t" style="left:656.00px;top:1131.81px;font-size:24.8px;color:#5e5e5e;letter-spacing:0.079px;transform:scaleX(1.0102);transform-origin:0 0;">In service</span>
<span class="t" style="left:1135.50px;top:1055.83px;font-size:28.2px;color:#424242;letter-spacing:0.530px;transform:scaleX(1.0508);transform-origin:0 0;">Group 157673</span>
<span class="t" style="left:1536.00px;top:1055.83px;font-size:28.2px;color:#424242;letter-spacing:0.743px;transform:scaleX(1.0628);transform-origin:0 0;">3S12345</span>
<span class="t" style="left:1536.00px;top:1093.21px;font-size:24.8px;color:#747474;letter-spacing:0.156px;transform:scaleX(1.0199);transform-origin:0 0;">Colorado, United States</span>
<span class="t" style="left:1936.00px;top:1055.83px;font-size:28.2px;color:#424242;letter-spacing:0.211px;transform:scaleX(1.0215);transform-origin:0 0;">Vehicle Gateway</span>
<span class="t" style="left:1936.00px;top:1093.21px;font-size:24.8px;color:#747474;letter-spacing:0.222px;transform:scaleX(1.0233);transform-origin:0 0;">S/N: ABCD928051</span>
<div class="tag" style="left:2416px;top:1050px;"></div>
<span class="t" style="left:2429.30px;top:1061.13px;font-size:28.2px;color:#237a45;letter-spacing:0.315px;transform:scaleX(1.0317);transform-origin:0 0;">Active</span>
<div class="b" style="left:520px;top:1193px;width:2130px;height:2px;background:#ececec;"></div>
<div class="cb" style="left:573px;top:1233px;"></div>
<span class="t" style="left:655.50px;top:1231.83px;font-size:28.2px;color:#424242;letter-spacing:0.535px;transform:scaleX(1.0568);transform-origin:0 0;">Vehicle 1837306</span>
<span class="t" style="left:655.50px;top:1269.21px;font-size:24.8px;color:#747474;letter-spacing:0.172px;transform:scaleX(1.0157);transform-origin:0 0;">RAM 2500</span>
<span class="t" style="left:656.00px;top:1307.81px;font-size:24.8px;color:#5e5e5e;letter-spacing:0.079px;transform:scaleX(1.0102);transform-origin:0 0;">In service</span>
<span class="t" style="left:1135.50px;top:1231.83px;font-size:28.2px;color:#424242;letter-spacing:0.530px;transform:scaleX(1.0508);transform-origin:0 0;">Group 157673</span>
<span class="t" style="left:1536.00px;top:1231.83px;font-size:28.2px;color:#424242;letter-spacing:0.743px;transform:scaleX(1.0628);transform-origin:0 0;">3S12345</span>
<span class="t" style="left:1536.00px;top:1269.21px;font-size:24.8px;color:#747474;letter-spacing:0.161px;transform:scaleX(1.0199);transform-origin:0 0;">New Mexico, United States</span>
<span class="t" style="left:1936.00px;top:1231.83px;font-size:28.2px;color:#424242;letter-spacing:0.211px;transform:scaleX(1.0215);transform-origin:0 0;">Vehicle Gateway</span>
<span class="t" style="left:1936.00px;top:1269.21px;font-size:24.8px;color:#747474;letter-spacing:0.222px;transform:scaleX(1.0233);transform-origin:0 0;">S/N: ABCD927710</span>
<div class="tag" style="left:2416px;top:1226px;"></div>
<span class="t" style="left:2429.30px;top:1237.13px;font-size:28.2px;color:#237a45;letter-spacing:0.315px;transform:scaleX(1.0317);transform-origin:0 0;">Active</span>
<div class="b" style="left:520px;top:1369px;width:2130px;height:2px;background:#ececec;"></div>
<div class="cb" style="left:573px;top:1409px;"></div>
<span class="t" style="left:655.50px;top:1407.83px;font-size:28.2px;color:#424242;letter-spacing:0.535px;transform:scaleX(1.0568);transform-origin:0 0;">Vehicle 1879335</span>
<span class="t" style="left:655.50px;top:1445.21px;font-size:24.8px;color:#747474;letter-spacing:-0.119px;transform:scaleX(0.9887);transform-origin:0 0;">FORD F-150</span>
<span class="t" style="left:656.00px;top:1483.81px;font-size:24.8px;color:#5e5e5e;letter-spacing:0.079px;transform:scaleX(1.0102);transform-origin:0 0;">In service</span>
<span class="t" style="left:1135.50px;top:1407.83px;font-size:28.2px;color:#424242;letter-spacing:0.458px;transform:scaleX(1.0432);transform-origin:0 0;">Group 4282</span>
<span class="t" style="left:1536.00px;top:1407.83px;font-size:28.2px;color:#424242;letter-spacing:0.743px;transform:scaleX(1.0628);transform-origin:0 0;">3S12345</span>
<span class="t" style="left:1536.00px;top:1445.21px;font-size:24.8px;color:#747474;letter-spacing:0.156px;transform:scaleX(1.0199);transform-origin:0 0;">Texas, United States</span>
<span class="t" style="left:1936.60px;top:1406.46px;font-size:28.4px;color:#b4b4b4;">—</span>
<div class="tag" style="left:2416px;top:1402px;"></div>
<span class="t" style="left:2429.30px;top:1413.13px;font-size:28.2px;color:#237a45;letter-spacing:0.315px;transform:scaleX(1.0317);transform-origin:0 0;">Active</span>
<div class="b" style="left:520px;top:1545px;width:2130px;height:2px;background:#ececec;"></div>
<div class="cb" style="left:573px;top:1585px;"></div>
<span class="t" style="left:655.50px;top:1583.83px;font-size:28.2px;color:#424242;letter-spacing:0.535px;transform:scaleX(1.0568);transform-origin:0 0;">Vehicle 1837317</span>
<span class="t" style="left:655.50px;top:1621.21px;font-size:24.8px;color:#747474;letter-spacing:0.060px;transform:scaleX(1.0055);transform-origin:0 0;">RAM 1500</span>
<span class="t" style="left:656.00px;top:1659.81px;font-size:24.8px;color:#5e5e5e;letter-spacing:0.079px;transform:scaleX(1.0102);transform-origin:0 0;">In service</span>
<span class="t" style="left:1135.50px;top:1583.83px;font-size:28.2px;color:#424242;letter-spacing:0.458px;transform:scaleX(1.0432);transform-origin:0 0;">Group 3456</span>
<span class="t" style="left:1536.00px;top:1583.83px;font-size:28.2px;color:#424242;letter-spacing:0.743px;transform:scaleX(1.0628);transform-origin:0 0;">3S12345</span>
<span class="t" style="left:1536.00px;top:1621.21px;font-size:24.8px;color:#747474;letter-spacing:0.156px;transform:scaleX(1.0199);transform-origin:0 0;">Colorado, United States</span>
<span class="t" style="left:1936.00px;top:1583.83px;font-size:28.2px;color:#424242;letter-spacing:0.211px;transform:scaleX(1.0215);transform-origin:0 0;">Vehicle Gateway</span>
<span class="t" style="left:1936.00px;top:1621.21px;font-size:24.8px;color:#747474;letter-spacing:0.222px;transform:scaleX(1.0233);transform-origin:0 0;">S/N: ABCD927683</span>
<div class="tag" style="left:2416px;top:1578px;"></div>
<span class="t" style="left:2429.30px;top:1589.13px;font-size:28.2px;color:#237a45;letter-spacing:0.315px;transform:scaleX(1.0317);transform-origin:0 0;">Active</span>
<div class="b" style="left:520px;top:1721px;width:2130px;height:2px;background:#ececec;"></div>
<div class="cb" style="left:573px;top:1761px;"></div>
<span class="t" style="left:655.50px;top:1759.83px;font-size:28.2px;color:#424242;letter-spacing:0.535px;transform:scaleX(1.0568);transform-origin:0 0;">Vehicle 1716368</span>
<span class="t" style="left:655.50px;top:1797.21px;font-size:24.8px;color:#747474;letter-spacing:0.060px;transform:scaleX(1.0055);transform-origin:0 0;">RAM 1500</span>
<span class="t" style="left:656.00px;top:1835.81px;font-size:24.8px;color:#5e5e5e;letter-spacing:0.079px;transform:scaleX(1.0102);transform-origin:0 0;">In service</span>
<span class="t" style="left:1135.50px;top:1759.83px;font-size:28.2px;color:#424242;letter-spacing:0.458px;transform:scaleX(1.0432);transform-origin:0 0;">Group 4282</span>
<span class="t" style="left:1536.00px;top:1759.83px;font-size:28.2px;color:#424242;letter-spacing:0.743px;transform:scaleX(1.0628);transform-origin:0 0;">3S12345</span>
<span class="t" style="left:1536.00px;top:1797.21px;font-size:24.8px;color:#747474;letter-spacing:0.156px;transform:scaleX(1.0199);transform-origin:0 0;">Colorado, United States</span>
<span class="t" style="left:1936.00px;top:1759.83px;font-size:28.2px;color:#424242;letter-spacing:0.211px;transform:scaleX(1.0215);transform-origin:0 0;">Vehicle Gateway</span>
<span class="t" style="left:1936.00px;top:1797.21px;font-size:24.8px;color:#747474;letter-spacing:0.222px;transform:scaleX(1.0233);transform-origin:0 0;">S/N: ABCD927910</span>
<div class="tag" style="left:2416px;top:1754px;"></div>
<span class="t" style="left:2429.30px;top:1765.13px;font-size:28.2px;color:#237a45;letter-spacing:0.315px;transform:scaleX(1.0317);transform-origin:0 0;">Active</span>
<div class="b" style="left:2502px;top:410px;width:20px;height:1469px;background:linear-gradient(to right,rgba(0,0,0,0),rgba(0,0,0,0.05));"></div>
<div class="b" style="left:2522px;top:410px;width:128px;height:1469px;background:#fff;"></div>
<div class="more" style="left:2546.5px;top:522px;"><i style="left:14.7px"></i><i style="left:25.2px"></i><i style="left:35.7px"></i></div>
<div class="b" style="left:2522px;top:665px;width:120px;height:2px;background:linear-gradient(to right,#f1f1f1,#fafafa);"></div>
<div class="more" style="left:2546.5px;top:698px;"><i style="left:14.7px"></i><i style="left:25.2px"></i><i style="left:35.7px"></i></div>
<div class="b" style="left:2522px;top:841px;width:120px;height:2px;background:linear-gradient(to right,#f1f1f1,#fafafa);"></div>
<div class="more" style="left:2546.5px;top:874px;"><i style="left:14.7px"></i><i style="left:25.2px"></i><i style="left:35.7px"></i></div>
<div class="b" style="left:2522px;top:1017px;width:120px;height:2px;background:linear-gradient(to right,#f1f1f1,#fafafa);"></div>
<div class="more" style="left:2546.5px;top:1050px;"><i style="left:14.7px"></i><i style="left:25.2px"></i><i style="left:35.7px"></i></div>
<div class="b" style="left:2522px;top:1193px;width:120px;height:2px;background:linear-gradient(to right,#f1f1f1,#fafafa);"></div>
<div class="more" style="left:2546.5px;top:1226px;"><i style="left:14.7px"></i><i style="left:25.2px"></i><i style="left:35.7px"></i></div>
<div class="b" style="left:2522px;top:1369px;width:120px;height:2px;background:linear-gradient(to right,#f1f1f1,#fafafa);"></div>
<div class="more" style="left:2546.5px;top:1402px;"><i style="left:14.7px"></i><i style="left:25.2px"></i><i style="left:35.7px"></i></div>
<div class="b" style="left:2522px;top:1545px;width:120px;height:2px;background:linear-gradient(to right,#f1f1f1,#fafafa);"></div>
<div class="more" style="left:2546.5px;top:1578px;"><i style="left:14.7px"></i><i style="left:25.2px"></i><i style="left:35.7px"></i></div>
<div class="b" style="left:2522px;top:1721px;width:120px;height:2px;background:linear-gradient(to right,#f1f1f1,#fafafa);"></div>
<div class="more" style="left:2546.5px;top:1754px;"><i style="left:14.7px"></i><i style="left:25.2px"></i><i style="left:35.7px"></i></div>
<div class="b" style="left:520px;top:489px;width:2130px;height:2px;background:#9d9d9d;"></div>
<div class="b" style="left:520px;top:491px;width:2130px;height:3px;background:linear-gradient(to bottom,rgba(0,0,0,0.16),rgba(0,0,0,0));"></div>
<div class="hl" style="left:520px;top:490px;width:2004px;height:178px;border-radius:24px;"></div>
<div class="b" style="left:2650px;top:410px;width:30px;height:1498px;background:#fcfcfc;"></div>
<div class="b" style="left:520px;top:1879px;width:2130px;height:29px;background:#fcfcfc;"></div>
<svg class="b" style="left:2655px;top:419px;overflow:visible" width="20" height="16" viewBox="0 0 20 16" fill="none" stroke="#8d8d8d" stroke-width="3" stroke-linejoin="round" ><path d="M2 14 10 2.2 18 14Z" fill="#8d8d8d"/></svg>
<svg class="b" style="left:2655px;top:1855.5px;overflow:visible" width="20" height="16" viewBox="0 0 20 16" fill="none" stroke="#8d8d8d" stroke-width="3" stroke-linejoin="round" ><path d="M2 2 10 13.8 18 2Z" fill="#8d8d8d"/></svg>
<div class="b" style="left:2656px;top:446px;width:18px;height:231px;background:#8d8d8d;border-radius:9px;"></div>
<svg class="b" style="left:529px;top:1885px;overflow:visible" width="16" height="20" viewBox="0 0 16 20" fill="none" stroke="#8d8d8d" stroke-width="3" stroke-linejoin="round" ><path d="M13.5 2 2.2 10 13.5 18Z" fill="#8d8d8d"/></svg>
<svg class="b" style="left:2625.5px;top:1885px;overflow:visible" width="16" height="20" viewBox="0 0 16 20" fill="none" stroke="#8d8d8d" stroke-width="3" stroke-linejoin="round" ><path d="M2.5 2 13.8 10 2.5 18Z" fill="#8d8d8d"/></svg>
<div class="b" style="left:556px;top:1885px;width:1825px;height:18px;background:#8d8d8d;border-radius:9px;"></div>
</section><footer>
<div class="b" style="left:520px;top:1908px;width:2160px;height:2px;background:#e5e5e5;"></div>
<div class="b" style="left:520px;top:1910px;width:2160px;height:70px;background:#fbfbfb;border-radius:0 0 15px 0;"></div>
<span class="t" style="left:567.50px;top:1933.97px;font-size:25.2px;color:#474747;letter-spacing:0.178px;transform:scaleX(1.0209);transform-origin:0 0;-webkit-text-stroke:0.88px #474747;">Showing 50 of 187</span>
</footer></main></body></html>
